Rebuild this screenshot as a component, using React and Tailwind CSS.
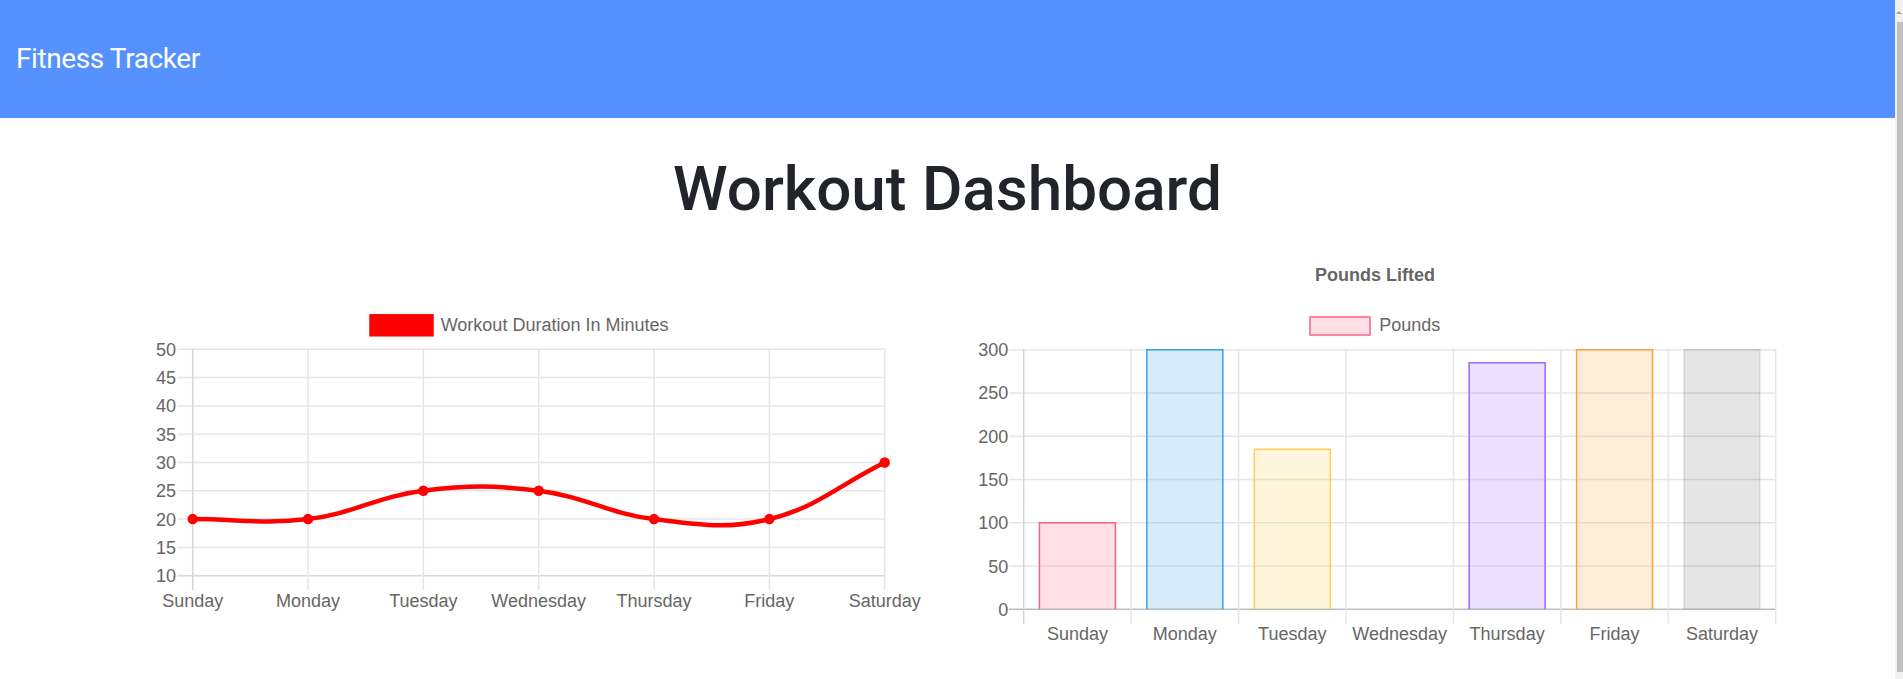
import React from "react";

const chartFont = '"Liberation Sans", Arial, Helvetica, sans-serif';
const days = ["Sunday", "Monday", "Tuesday", "Wednesday", "Thursday", "Friday", "Saturday"];

function splinePath(pts, t = 0.4) {
  const cps = pts.map((p, i) => {
    const prev = pts[i - 1] || p;
    const next = pts[i + 1] || p;
    const d01 = Math.hypot(p.x - prev.x, p.y - prev.y);
    const d12 = Math.hypot(next.x - p.x, next.y - p.y);
    let s01 = d01 / (d01 + d12);
    let s12 = d12 / (d01 + d12);
    if (isNaN(s01)) s01 = 0;
    if (isNaN(s12)) s12 = 0;
    const fa = t * s01;
    const fb = t * s12;
    return {
      prev: { x: p.x - fa * (next.x - prev.x), y: p.y - fa * (next.y - prev.y) },
      next: { x: p.x + fb * (next.x - prev.x), y: p.y + fb * (next.y - prev.y) },
    };
  });
  let d = `M ${pts[0].x} ${pts[0].y}`;
  for (let i = 1; i < pts.length; i++) {
    const a = cps[i - 1].next;
    const b = cps[i].prev;
    d += ` C ${a.x} ${a.y} ${b.x} ${b.y} ${pts[i].x} ${pts[i].y}`;
  }
  return d;
}

function LineChart() {
  const X0 = 77.7;
  const step = 115.33;
  const xRight = X0 + step * 6;
  const yOf = (v) => 330.7 - (v - 10) * 5.66;
  const ticks = [50, 45, 40, 35, 30, 25, 20, 15, 10];
  const values = [20, 20, 25, 25, 20, 20, 30];
  const pts = values.map((v, i) => ({ x: X0 + i * step, y: yOf(v) }));
  return (
    <svg width="810" height="410" viewBox="0 0 810 410" className="block shrink-0">
      <g fontFamily={chartFont} fontSize="18" fill="#666">
        <rect x="256.5" y="71.3" width="60" height="18" fill="#ff0000" stroke="#ff0000" strokeWidth="4.5" />
        <text x="325.7" y="85.7">Workout Duration In Minutes</text>
        {ticks.map((v) => (
          <line key={v} x1="62.3" x2={xRight} y1={yOf(v)} y2={yOf(v)} stroke={v === 10 ? "#d9d9d9" : "#e6e6e6"} strokeWidth="1.5" />
        ))}
        {days.map((d, i) => (
          <line key={d} x1={X0 + i * step} x2={X0 + i * step} y1={yOf(50)} y2="345" stroke={i === 0 ? "#d4d4d4" : "#e6e6e6"} strokeWidth="1.5" />
        ))}
        {ticks.map((v) => (
          <text key={v} x="61" y={yOf(v) + 6.5} textAnchor="end">{v}</text>
        ))}
        {days.map((d, i) => (
          <text key={d} x={X0 + i * step} y="362" textAnchor="middle">{d}</text>
        ))}
        <path d={splinePath(pts)} fill="none" stroke="#ff0000" strokeWidth="4.5" />
        {pts.map((p, i) => (
          <circle key={i} cx={p.x} cy={p.y} r="4.5" fill="#ff0000" stroke="#ff0000" strokeWidth="1.5" />
        ))}
      </g>
    </svg>
  );
}

function BarChart() {
  const A = 53.7;
  const step = 107.43;
  const right = A + step * 7;
  const yOf = (v) => 364.3 - v * 0.8653;
  const ticks = [300, 250, 200, 150, 100, 50, 0];
  const bars = [
    { v: 100, fill: "rgba(255,99,132,0.2)", stroke: "rgb(255,99,132)" },
    { v: 300, fill: "rgba(54,162,235,0.2)", stroke: "rgb(54,162,235)" },
    { v: 185, fill: "rgba(255,206,86,0.2)", stroke: "rgb(255,206,86)" },
    { v: 0, fill: "rgba(75,192,192,0.2)", stroke: "rgb(75,192,192)" },
    { v: 285, fill: "rgba(153,102,255,0.2)", stroke: "rgb(153,102,255)" },
    { v: 300, fill: "rgba(255,159,64,0.2)", stroke: "rgb(255,159,64)" },
    { v: 300, fill: "rgba(0,0,0,0.1)", stroke: "rgba(0,0,0,0.1)" },
  ];
  const bw = 76;
  return (
    <svg width="810" height="410" viewBox="0 0 810 410" className="block shrink-0">
      <g fontFamily={chartFont} fontSize="18" fill="#666">
        <text x="405" y="36" textAnchor="middle" fontWeight="bold">Pounds Lifted</text>
        <rect x="340" y="72" width="60" height="18" fill="rgba(255,99,132,0.2)" stroke="rgb(255,99,132)" strokeWidth="1.5" />
        <text x="409.3" y="86">Pounds</text>
        {ticks.map((v) => (
          <line key={v} x1="39" x2={right} y1={yOf(v)} y2={yOf(v)} stroke={v === 0 ? "#bfbfbf" : "#e6e6e6"} strokeWidth="1.5" />
        ))}
        {Array.from({ length: 8 }).map((_, i) => (
          <line key={i} x1={A + i * step} x2={A + i * step} y1={yOf(300)} y2="379" stroke={i === 0 ? "#d4d4d4" : "#e6e6e6"} strokeWidth="1.5" />
        ))}
        {ticks.map((v) => (
          <text key={v} x="38.3" y={yOf(v) + 6.5} textAnchor="end">{v}</text>
        ))}
        {bars.map((b, i) => {
          if (b.v === 0) return null;
          const cx = A + (i + 0.5) * step;
          const x1 = cx - bw / 2;
          const x2 = cx + bw / 2;
          const top = yOf(b.v);
          const base = yOf(0);
          return (
            <g key={i}>
              <rect x={x1} y={top} width={bw} height={base - top} fill={b.fill} stroke="none" />
              <path d={`M ${x1} ${base} L ${x1} ${top} L ${x2} ${top} L ${x2} ${base}`} fill="none" stroke={b.stroke} strokeWidth="1.5" />
            </g>
          );
        })}
        {days.map((d, i) => (
          <text key={d} x={A + (i + 0.5) * step} y="395" textAnchor="middle">{d}</text>
        ))}
      </g>
    </svg>
  );
}

export default function App() {
  return (
    <div className="flex w-full h-[679px] overflow-hidden bg-white">
      <div className="flex-1 min-w-0">
        <header className="h-[118px] bg-[#5692ff] flex items-center pl-[16px]">
          <span className="text-white text-[28px] leading-none tracking-[-0.4px] font-['Roboto',sans-serif]">Fitness Tracker</span>
        </header>
        <h1 className="mt-[35px] text-center text-[62px] leading-[72px] font-medium text-[#212529] font-['Roboto',sans-serif]">
          Workout Dashboard
        </h1>
        <div className="mt-[20px] flex justify-center gap-[45px]">
          <LineChart />
          <BarChart />
        </div>
      </div>
      <div className="w-[8px] h-[679px] bg-[#f1f1f1] flex flex-col items-center shrink-0">
        <div className="mt-[11px] w-0 h-0 border-l-[3px] border-r-[3px] border-b-[3px] border-l-transparent border-r-transparent border-b-[#a3a3a3]" />
        <div className="mt-[8px] ml-[1px] w-[6px] h-[650px] bg-[#c1c1c1]" />
      </div>
    </div>
  );
}
